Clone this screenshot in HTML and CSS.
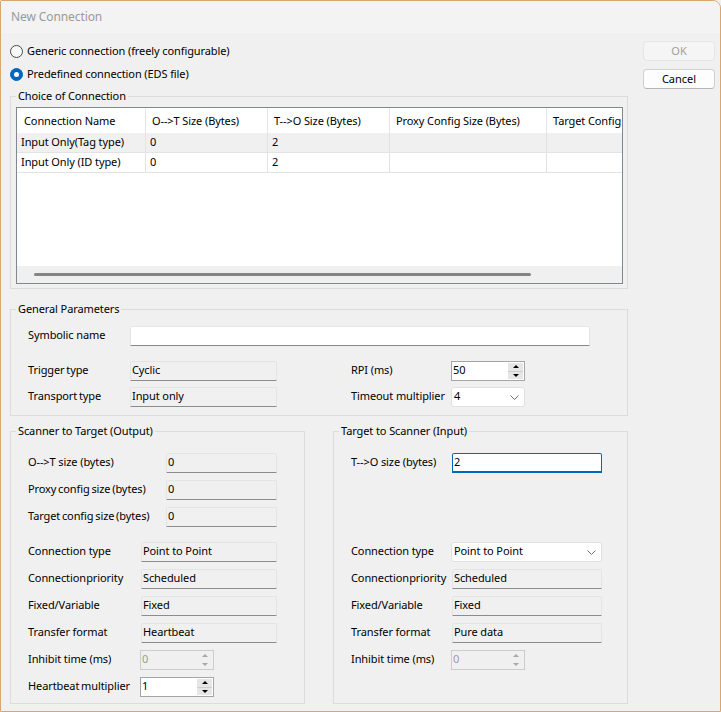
FILE: index.html
```html
<!DOCTYPE html>
<html lang="en">
<head>
  <meta charset="UTF-8" />
  <title>New Connection</title>
  <link rel="stylesheet" href="styles.css">
</head>
<body>
  <div class="window">
    <div class="titlebar">New Connection</div>

    <div class="content">
      <div class="main">
        <div class="radios">
          <label class="radio-row"><span class="radio"></span><span class="rtext">Generic connection (freely configurable)</span></label>
          <label class="radio-row"><span class="radio checked"></span><span class="rtext">Predefined connection (EDS file)</span></label>
        </div>

        <fieldset class="group group-choice">
          <legend>Choice of Connection</legend>
          <div class="group-body">
            <div class="listview">
              <div class="lv-body">
                <div class="lv-grid">
                  <div class="lv-head">Connection Name</div>
                  <div class="lv-head">O--&gt;T Size (Bytes)</div>
                  <div class="lv-head">T--&gt;O Size (Bytes)</div>
                  <div class="lv-head">Proxy Config Size (Bytes)</div>
                  <div class="lv-head">Target Config Size (Bytes)</div>

                  <div class="lv-cell alt">Input Only(Tag type)</div>
                  <div class="lv-cell alt">0</div>
                  <div class="lv-cell alt">2</div>
                  <div class="lv-cell alt"></div>
                  <div class="lv-cell alt"></div>

                  <div class="lv-cell">Input Only (ID type)</div>
                  <div class="lv-cell">0</div>
                  <div class="lv-cell">2</div>
                  <div class="lv-cell"></div>
                  <div class="lv-cell"></div>
                </div>
              </div>
              <div class="lv-scroll"><div class="lv-thumb"></div></div>
            </div>
          </div>
        </fieldset>

        <fieldset class="group group-general">
          <legend>General Parameters</legend>
          <div class="group-body">
            <div class="row">
              <span class="lbl w102">Symbolic name</span>
              <div class="textbox w460"></div>
            </div>
            <div class="row gap15">
              <span class="lbl tight w102">Trigger type</span>
              <div class="readonly w147">Cyclic</div>
              <span class="lbl w100 push74">RPI (ms)</span>
              <div class="spin">
                <span class="spin-value">50</span>
                <span class="spin-btns"><i class="up"></i><i class="down"></i></span>
              </div>
            </div>
            <div class="row gap6">
              <span class="lbl tight w102">Transport type</span>
              <div class="readonly w147">Input only</div>
              <span class="lbl w100 push74">Timeout multiplier</span>
              <div class="combo w74">
                <span>4</span>
                <svg class="chevron" viewBox="0 0 9 5"><polyline points="0.5,0.5 4.5,4.5 8.5,0.5"/></svg>
              </div>
            </div>
          </div>
        </fieldset>

        <div class="group-pair">
          <fieldset class="group group-half">
            <legend>Scanner to Target (Output)</legend>
            <div class="group-body half-body">
              <div class="row"><span class="lbl w138">O--&gt;T size (bytes)</span><div class="readonly w111">0</div></div>
              <div class="row gap7"><span class="lbl tight w138">Proxy config size (bytes)</span><div class="readonly w111">0</div></div>
              <div class="row gap7"><span class="lbl tight w138">Target config size (bytes)</span><div class="readonly w111">0</div></div>

              <div class="row gap15"><span class="lbl w113">Connection type</span><div class="readonly w136">Point to Point</div></div>
              <div class="row gap7"><span class="lbl tighter w113">Connection priority</span><div class="readonly w136">Scheduled</div></div>
              <div class="row gap7"><span class="lbl w113">Fixed/Variable</span><div class="readonly w136">Fixed</div></div>
              <div class="row gap7"><span class="lbl w113">Transfer format</span><div class="readonly w136">Heartbeat</div></div>
              <div class="row gap7">
                <span class="lbl w112">Inhibit time (ms)</span>
                <div class="spin disabled">
                  <span class="spin-value">0</span>
                  <span class="spin-btns"><i class="up"></i><i class="down"></i></span>
                </div>
              </div>
              <div class="row gap7">
                <span class="lbl tight w112">Heartbeat multiplier</span>
                <div class="spin">
                  <span class="spin-value">1</span>
                  <span class="spin-btns"><i class="up"></i><i class="down"></i></span>
                </div>
              </div>
            </div>
          </fieldset>

          <fieldset class="group group-half">
            <legend>Target to Scanner (Input)</legend>
            <div class="group-body half-body">
              <div class="row"><span class="lbl w101">T--&gt;O size (bytes)</span><div class="textbox focused w150">2</div></div>
              <div class="row gap7"></div>
              <div class="row gap7"></div>

              <div class="row gap15">
                <span class="lbl w100">Connection type</span>
                <div class="combo w151">
                  <span>Point to Point</span>
                  <svg class="chevron" viewBox="0 0 9 5"><polyline points="0.5,0.5 4.5,4.5 8.5,0.5"/></svg>
                </div>
              </div>
              <div class="row gap7"><span class="lbl tighter w101">Connection priority</span><div class="readonly w150">Scheduled</div></div>
              <div class="row gap7"><span class="lbl w101">Fixed/Variable</span><div class="readonly w150">Fixed</div></div>
              <div class="row gap7"><span class="lbl w101">Transfer format</span><div class="readonly w150">Pure data</div></div>
              <div class="row gap7">
                <span class="lbl w100">Inhibit time (ms)</span>
                <div class="spin disabled">
                  <span class="spin-value">0</span>
                  <span class="spin-btns"><i class="up"></i><i class="down"></i></span>
                </div>
              </div>
            </div>
          </fieldset>
        </div>
      </div>

      <div class="side">
        <button class="btn" disabled>OK</button>
        <button class="btn btn-cancel">Cancel</button>
      </div>
    </div>
  </div>
</body>
</html>
```

FILE: styles.css
```css
body {
  margin: 0;
  font-family: "Noto Sans", "Liberation Sans", sans-serif;
  font-size: 11px;
  letter-spacing: -0.1px;
  color: #000;
  background: #f0f0f0;
}
.window {
  width: 721px;
  height: 712px;
  box-sizing: border-box;
  border: 1px solid #d9a66f;
  border-radius: 2px 8px 0 0;
  background: #f0f0f0;
  overflow: hidden;
}
.titlebar {
  height: 32px;
  line-height: 32px;
  padding-left: 10px;
  background: #f3f3f3;
  color: #9a9a9a;
  font-size: 12px;
}
.content {
  display: flex;
  padding: 8px 0 0 9px;
}
.main {
  width: 618px;
}

/* radios */
.radios {
  display: flex;
  flex-direction: column;
  gap: 3px;
}
.radio-row {
  display: flex;
  align-items: center;
  height: 20px;
}
.rtext {
  padding-bottom: 2px;
}
.radio {
  width: 13px;
  height: 13px;
  box-sizing: border-box;
  border: 1px solid #4a4a4a;
  border-radius: 50%;
  margin-right: 4px;
  background: #f8f8f8;
  display: flex;
  align-items: center;
  justify-content: center;
}
.radio.checked {
  background: #0067c0;
  border-color: #0067c0;
}
.radio.checked::after {
  content: "";
  width: 5px;
  height: 5px;
  border-radius: 50%;
  background: #fff;
}

/* group boxes */
.group {
  margin: 0;
  padding: 0;
  min-width: 0;
  box-sizing: border-box;
  border: 1px solid #dcdcdc;
}
.group legend {
  margin-left: 5px;
  padding: 0 2px;
  line-height: 14px;
}
.group-choice {
  width: 618px;
  margin-top: 5px;
}
.group-choice .group-body {
  padding: 4px 4px 4px 5px;
}
.group-general {
  width: 618px;
  margin-top: 13px;
}
.group-general .group-body {
  padding: 10px 0 8px 17px;
}
.group-pair {
  display: flex;
  gap: 28px;
  margin-top: 8px;
}
.group-half {
  width: 295px;
}
.half-body {
  padding: 15px 0 6px 17px;
}

/* list view */
.listview {
  width: 607px;
  height: 177px;
  box-sizing: border-box;
  border: 1px solid #828790;
  background: #fff;
}
.lv-body {
  height: 158px;
  overflow: hidden;
}
.lv-grid {
  display: grid;
  grid-template-columns: 129px 122px 122px 157px 160px;
  width: 690px;
}
.lv-head {
  height: 25px;
  line-height: 25px;
  padding-left: 6px;
  white-space: nowrap;
  border-right: 1px solid #e5e5e5;
  box-sizing: border-box;
  overflow: hidden;
}
.lv-head:first-child {
  padding-left: 7px;
}
.lv-cell {
  height: 20px;
  line-height: 18px;
  padding-left: 4px;
  white-space: nowrap;
  box-sizing: border-box;
  border-right: 1px solid #e3e3e3;
  border-bottom: 1px solid #e3e3e3;
}
.lv-cell.alt {
  background: #f0f0f0;
}
.lv-scroll {
  height: 17px;
  background: #f0f0f0;
  display: flex;
  align-items: center;
}
.lv-thumb {
  margin-left: 17px;
  width: 497px;
  height: 3px;
  border-radius: 2px;
  background: #858585;
}

/* form rows */
.row {
  display: flex;
  align-items: center;
  height: 20px;
  white-space: nowrap;
}
.gap6 { margin-top: 6px; }
.gap7 { margin-top: 7px; }
.gap15 { margin-top: 15px; }
.lbl {
  flex: none;
  padding-bottom: 3px;
}
.tight { word-spacing: -1px; }
.tighter { word-spacing: -2.5px; }
.w100 { width: 100px; }
.w101 { width: 101px; }
.w102 { width: 102px; }
.w112 { width: 112px; }
.w113 { width: 113px; }
.w138 { width: 138px; }
.w74 { width: 74px; }
.w111 { width: 111px; }
.w136 { width: 136px; }
.w147 { width: 147px; }
.w150 { width: 150px; }
.w151 { width: 151px; }
.w460 { width: 460px; }
.push74 { margin-left: 74px; }

.textbox,
.readonly,
.combo {
  flex: none;
  height: 20px;
  box-sizing: border-box;
  line-height: 16px;
  padding-left: 1px;
  border-radius: 2px 2px 0 0;
}
.textbox {
  background: #fff;
  border: 1px solid #e6e6e6;
  border-bottom-color: #878787;
}
.textbox.focused {
  border: 1px solid #0067c0;
  border-bottom-width: 2px;
  line-height: 16px;
}
.readonly {
  background: #f0f0f0;
  border: 1px solid #e4e4e4;
  border-bottom-color: #8c8c8c;
}
.combo {
  display: flex;
  align-items: center;
  justify-content: space-between;
  padding: 0 5px 0 2px;
  background: #fff;
  border: 1px solid #e0e0e0;
  border-radius: 3px;
}
.combo span {
  padding-bottom: 2px;
}
.chevron {
  width: 9px;
  height: 5px;
  fill: none;
  stroke: #6e6e6e;
  stroke-width: 1;
}

/* spin box */
.spin {
  flex: none;
  display: flex;
  width: 74px;
  height: 20px;
  box-sizing: border-box;
  border: 1px solid #a5a5a5;
  background: #fff;
}
.spin-value {
  flex: 1;
  padding-left: 1px;
  line-height: 16px;
}
.spin-btns {
  width: 15px;
  margin: 1px 1px 1px 0;
  display: flex;
  flex-direction: column;
  gap: 1px;
  background: #cfcfcf;
}
.spin-btns i {
  flex: 1;
  display: flex;
  align-items: center;
  justify-content: center;
  background: #e6e6e6;
}
.spin-btns i::after {
  content: "";
  border-left: 3px solid transparent;
  border-right: 3px solid transparent;
}
.spin-btns .up::after {
  border-bottom: 3px solid #000;
}
.spin-btns .down::after {
  border-top: 3px solid #000;
}
.spin.disabled {
  background: #f0f0f0;
  border-color: #cdcdcd;
  color: #9a9a9a;
}
.spin.disabled .spin-btns {
  background: #f0f0f0;
}
.spin.disabled .spin-btns i {
  background: #f0f0f0;
}
.spin.disabled .up::after {
  border-bottom-color: #a8a8a8;
}
.spin.disabled .down::after {
  border-top-color: #a8a8a8;
}

/* buttons */
.side {
  margin-left: 15px;
  width: 72px;
  display: flex;
  flex-direction: column;
  gap: 8px;
}
.btn {
  height: 20px;
  padding: 0 0 2px;
  font: inherit;
  font-size: 11px;
  color: #000;
  background: #fdfdfd;
  border: 1px solid #d0d0d0;
  border-bottom-color: #b5b5b5;
  border-radius: 4px;
}
.btn:disabled {
  color: #a0a0a0;
  background: #f5f5f5;
  border-color: #e5e5e5;
}
```
